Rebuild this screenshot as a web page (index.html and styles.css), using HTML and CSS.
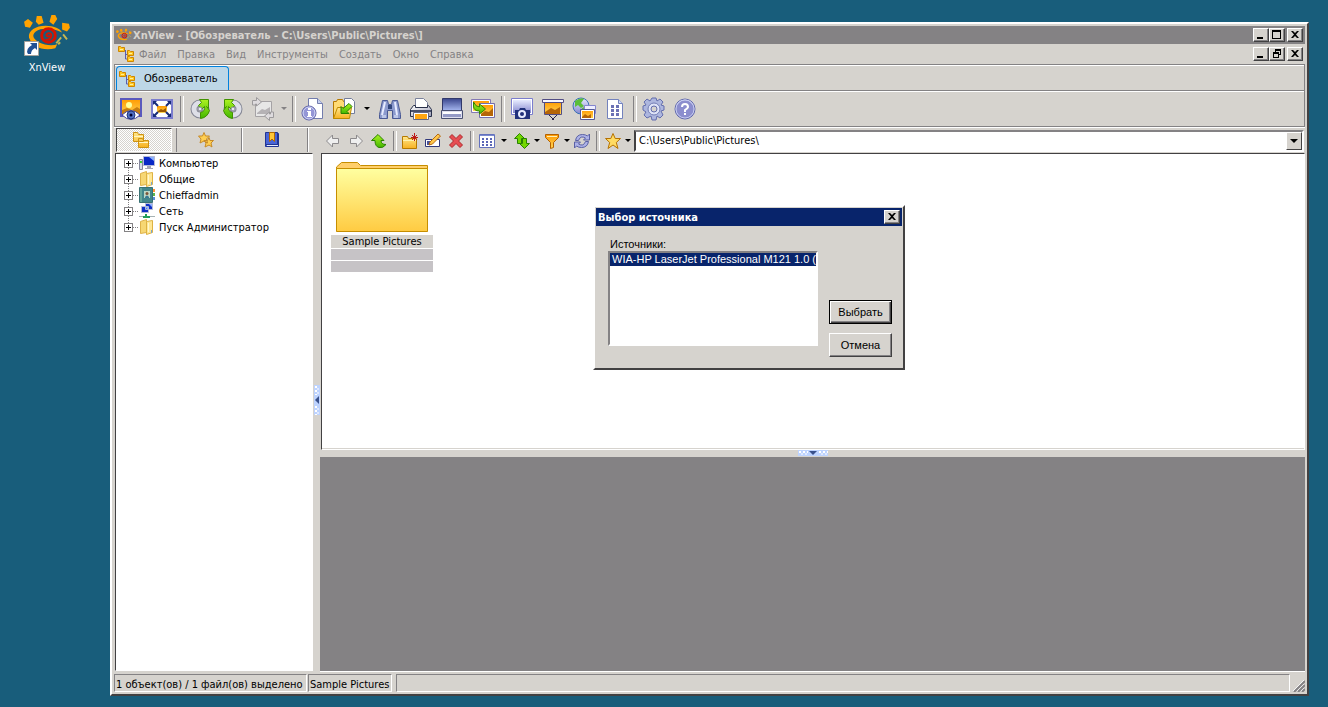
FILE: index.html
```
<!DOCTYPE html>
<html lang="ru">
<head>
    <meta charset="UTF-8">
    <meta name="viewport" content="width=device-width, initial-scale=1.0">
    <title>XnView - Обозреватель</title>
    <link rel="stylesheet" href="styles.css">
</head>
<body>
    <!-- Icon library -->
    <svg class="icon-library" aria-hidden="true">
        <defs>
            <linearGradient id="gOrange" x1="0" y1="0" x2="0" y2="1"><stop offset="0" stop-color="#ff9a00"/><stop offset="1" stop-color="#ffd75a"/></linearGradient>
            <linearGradient id="gFolder" x1="0" y1="0" x2="0" y2="1"><stop offset="0" stop-color="#ffffa0"/><stop offset="1" stop-color="#ffcb42"/></linearGradient>
            <linearGradient id="gGold" x1="0" y1="0" x2="0" y2="1"><stop offset="0" stop-color="#ffe78c"/><stop offset="1" stop-color="#f7b221"/></linearGradient>
            <linearGradient id="gBlue" x1="0" y1="0" x2="0" y2="1"><stop offset="0" stop-color="#e7ebff"/><stop offset="1" stop-color="#8486ce"/></linearGradient>
            <linearGradient id="gDeep" x1="0" y1="0" x2="0" y2="1"><stop offset="0" stop-color="#39458c"/><stop offset="1" stop-color="#a5b6ef"/></linearGradient>
            <linearGradient id="gGreen" x1="0" y1="0" x2="0" y2="1"><stop offset="0" stop-color="#adf321"/><stop offset="1" stop-color="#42b600"/></linearGradient>
            <linearGradient id="gGray" x1="0" y1="0" x2="1" y2="1"><stop offset="0" stop-color="#ffffff"/><stop offset="1" stop-color="#9c9eb5"/></linearGradient>
        </defs>
        <symbol id="logo" viewBox="0 0 48 40">
            <path fill="#ffa200" d="M0 8l4-3 5 4-3 5-5-1zM13 2h5l2 7-5 2-3-3zM28 1h4l2 4-4 6-4-3zM39 9l7 1 1 4-3 4-5-2z"/>
            <path fill="#ffa200" d="M5 24C4 17 12 12 22 12c9 0 15 3 17 7l-5-2c-6-2-17-3-22 1-5 4-2 8 3 11 6 3 14 4 19 2l-2 4c-7 2-15 1-20-2C8 30 6 27 5 24z"/>
            <path fill="none" stroke="#c6b652" stroke-width="2" d="M33 30l5-6M35 31l2-2M40 21l4 5"/>
            <circle cx="25" cy="22" r="7" fill="none" stroke="#d61400" stroke-width="3"/>
            <path fill="none" stroke="#d61400" stroke-width="2" d="M26 22c0 2-4 1-3-1s5-2 5 1-3 5-6 4"/>
        </symbol>
        <symbol id="tree" viewBox="0 0 16 16">
            <path fill="none" stroke="#5a5dad" d="M7.500 5v8h3M8 8.500h2M5 4.500h3"/>
            <path fill="#ffc721" stroke="#ce8600" d="M.5.5h2l1 1h3v4h-6zM9.500 4.500h2l1 1h3v4h-6zM9.500 10.500h2l1 1h3v4h-6z"/>
            <path fill="#ffef9c" d="M2 3h3v1H2zM11 7h3v1h-3zM11 13h3v1h-3z"/>
        </symbol>
        <symbol id="folder" viewBox="0 0 16 16"><path fill="#f7d773" stroke="#deb24a" d="M1.500 2.500l6-2v13l-6 1z"/><path fill="#ffe794" stroke="#deb242" d="M7.500 2.500l6-1v12l-6 2z"/><path fill="#fff7ce" d="M9 4h1v9H9z"/><path fill="#7ba6ce" d="M12 11h1v3h-1z"/></symbol>
        <symbol id="view" viewBox="0 0 24 24">
            <path fill="url(#gOrange)" stroke="#5a59bd" stroke-width="2" d="M2 2h20v17H2z"/><circle cx="10" cy="8" r="3" fill="#ffff9c"/>
            <path fill="#c67d10" d="M3 13l5-2 5 2 5-3 3 2v6H3z"/><path fill="#fff" stroke="#42419c" d="M3 18q9-9 18 0-9 9-18 0z"/><circle cx="12" cy="18" r="4" fill="#5271c6" stroke="#21347b"/><circle cx="12" cy="18" r="1.500" fill="#000031"/>
        </symbol>
        <symbol id="fullscreen" viewBox="0 0 24 24">
            <path fill="#fff" stroke="#7b7dce" stroke-width="2" d="M2 3h20v18H2z"/><path fill="url(#gOrange)" d="M7 9h10v7H7z"/><path fill="#9c5900" d="M8 14l3-2 2 1 3-2v4H8z"/>
            <path fill="#182c7b" d="M3 4h4L3 8zM21 4h-4l4 4zM3 20h4l-4-4zM21 20h-4l4-4z"/><path stroke="#182c7b" stroke-width="2" d="M4 5l4 4M20 5l-4 4M4 19l4-4M20 19l-4-4"/>
        </symbol>
        <symbol id="rotate" viewBox="0 0 24 24">
            <circle cx="11" cy="12" r="6" fill="none" stroke="#848694" stroke-width="7"/><circle cx="11" cy="12" r="6" fill="none" stroke="#dedfe7" stroke-width="5"/>
            <path fill="url(#gGreen)" stroke="#429200" d="M10.500 2.500h9v9l-2-2 3 4q-2 7-9 8v-6q5-1 4-6l-3 3-3-4 3-3z"/><circle cx="11" cy="12" r="2" fill="#e7e7ef" stroke="#848694"/>
        </symbol>
        <symbol id="convert" viewBox="0 0 24 24">
            <path fill="#e7e7e7" stroke="#a5a2a5" d="M4.500 4.500h16v15h-16z"/><path fill="#b5b2b5" d="M6 16l5-4 3 1 5-3v7H6z"/>
            <path fill="#dedbde" stroke="#9c9a9c" d="M1.500 8V3.500h4v-3l5 4.500-5 4V7h-1v1zM22.500 15v5.500h-4v3l-5-4.500 5-4V17h1v-2z"/>
        </symbol>
        <symbol id="info" viewBox="0 0 24 24">
            <path fill="#fff" stroke="#737dad" d="M7.500 1.500h9l5 5v15h-14z"/><path fill="#c6cfef" stroke="#737dad" d="M16.500 1.500v5h5"/>
            <circle cx="8" cy="16" r="7" fill="#9496d6" stroke="#5a5da5"/><circle cx="8" cy="16" r="6" fill="none" stroke="#d6dbf7"/><path fill="#fff" d="M7 11h3v2H7zM6 14h4v5h1v1H6v-1h1v-4H6z"/>
        </symbol>
        <symbol id="open" viewBox="0 0 24 24">
            <path fill="#ffdb73" stroke="#b57900" d="M1.500 4.500h3l1-2h5l1 2h3v17h-13z"/><path fill="#fff" stroke="#737d9c" d="M12.500 1.500h7l3 3v12h-10z"/>
            <path fill="url(#gGold)" stroke="#bd8a00" d="M1.500 21.500l4-11h14l-2 11z"/><path fill="url(#gGreen)" stroke="#298200" d="M17 6.500l3 3-5 5 2 2h-8v-7l2 2z"/>
        </symbol>
        <symbol id="find" viewBox="0 0 24 24">
            <path fill="#8c9ace" stroke="#4a5994" d="M4.500 3.500h5l1 4h3l1-4h5l3 14v4h-8v-8h-5v8h-8v-4z"/><path fill="none" stroke="#e7ebff" stroke-width="2" d="M7 5L4 18M17 5l2 13"/><path fill="#31457b" d="M10 8h4v4h-4z"/><path fill="#bdc7e7" d="M4 18h4v3H4zM16 18h4v3h-4z"/>
        </symbol>
        <symbol id="print" viewBox="0 0 24 24">
            <path fill="#fff" stroke="#7b829c" d="M6.500 1.500h8l4 4v7h-12z"/><path fill="url(#gGray)" stroke="#29304a" d="M1.500 12.500l3-4h2v2h12v-2h1l3 4v7h-21z"/><path fill="#4a516b" d="M2 13h20v2H2z"/><path fill="#fff" stroke="#636984" d="M4.500 15.500h15v7h-15z"/><path fill="#ffa610" d="M6 17h12v5H6z"/>
        </symbol>
        <symbol id="scan" viewBox="0 0 24 24">
            <path fill="url(#gDeep)" stroke="#31386b" d="M2.500 1.500h19v12h-19z"/><path fill="#dedfef" stroke="#4a5173" d="M1.500 13.500h21v8h-21z"/><path fill="#949ac6" d="M3 17h18v3H3z"/><path fill="#fff" d="M3 15h18v2H3z"/>
        </symbol>
        <symbol id="batch" viewBox="0 0 24 24">
            <path fill="url(#gOrange)" stroke="#fff" d="M1.500 3.500h17v11h-17z"/><path fill="none" stroke="#8479b5" d="M.5 2.500h19v13H.5z"/><path fill="url(#gOrange)" stroke="#fff" d="M9.500 7.500h13v12h-13z"/><path fill="none" stroke="#736dad" d="M8.500 6.500h15v14h-15z"/>
            <path fill="#b56508" d="M10 17l4-3 4 1 4-4v8H10z"/><path fill="url(#gGreen)" stroke="#318600" d="M2.500 5v4q0 5 6 5v3l6-5-6-5v3q-4 0-6-5z"/>
        </symbol>
        <symbol id="capture" viewBox="0 0 24 24">
            <path fill="#fff" stroke="#7b7dce" d="M1.500 1.500h21v16h-21z"/><path fill="url(#gBlue)" d="M3 3h18v13H3z"/><path fill="#21307b" d="M5 13h4l1-2h5l1 2h4v9H5z"/><circle cx="12" cy="17" r="4" fill="#e7ebff"/><circle cx="12" cy="17" r="2" fill="#21307b"/>
        </symbol>
        <symbol id="slides" viewBox="0 0 24 24">
            <path fill="url(#gOrange)" stroke="#524d84" d="M3.500 4.500h17v13h-17z"/><path fill="#b56508" d="M4 15l6-4 4 2 5-3v7H4z"/><path fill="#f7f7ff" stroke="#524d84" d="M1.500 2.500h21v3h-21z"/><path fill="none" stroke="#29244a" d="M8 18l4 4 4-4"/><path fill="#29244a" d="M11 21h2v2h-2z"/>
        </symbol>
        <symbol id="web" viewBox="0 0 24 24">
            <circle cx="9" cy="9" r="8" fill="url(#gBlue)" stroke="#3971b5"/><path fill="#5abe39" d="M3 4q6-4 9-2L9 6l3 3-3 2-3-3-3 2zM10 11l5-2-1 6-4 1z"/>
            <path fill="#efefff" stroke="#8486ce" d="M12.500 8.500h11v8h-11z"/><path fill="url(#gOrange)" stroke="#525a9c" stroke-width="1" d="M8.500 12.500h14v10h-14z"/><path fill="none" stroke="#fff" d="M9.500 13.500h12v8h-12z"/><path fill="#b56508" d="M10 20l3-3 3 2 3-2v4h-9z"/>
        </symbol>
        <symbol id="contact" viewBox="0 0 24 24">
            <path fill="#fff" stroke="#7382bd" d="M4.500 2.500h11l4 4v15h-15z"/><path fill="#ced7f7" stroke="#7382bd" d="M15.500 2.500v4h4"/><path fill="#6b71b5" d="M8 8h3v3H8zM13 8h3v3h-3zM8 12h3v3H8zM13 12h3v3h-3zM8 16h3v3H8zM13 16h3v3h-3z"/>
        </symbol>
        <symbol id="gear" viewBox="0 0 24 24">
            <path fill="#adb6de" stroke="#636dad" d="M10 1h4l1 3 3-2 3 3-2 3 3 1v4l-3 1 2 4-3 3-3-2-1 4h-4l-1-4-4 2-3-3 2-3-3-2V9l3-1-2-3 3-3 3 2z"/><circle cx="12" cy="12" r="6" fill="#dee3f7" stroke="#737db5"/><circle cx="12" cy="12" r="3" fill="#d6d3ce" stroke="#636dad"/>
        </symbol>
        <symbol id="help" viewBox="0 0 24 24">
            <circle cx="12" cy="12" r="10" fill="url(#gBlue)" stroke="#636aad"/><circle cx="12" cy="12" r="9" fill="#8c8ece" stroke="#c6cbef"/><path fill="none" stroke="#fff" stroke-width="2" d="M9 10q0-3 3-3t3 3q0 1-3 3v2"/><path fill="#fff" d="M11 16h2v2h-2z"/>
        </symbol>
        <symbol id="folders" viewBox="0 0 16 16"><path fill="url(#gGold)" stroke="#ce9210" d="M.5.5h4l1 2h5v7H.5zM5.500 6.500h4l1 2h5v7h-10z"/><path fill="#fff7c6" d="M1 4h9v1H1zM6 10h9v1H6z"/></symbol>
        <symbol id="stars" viewBox="0 0 16 16"><path fill="#ffcf52" stroke="#c68a29" d="M6 .5l1.500 3.500h4L8.500 7l1 4L6 9l-4 2 1-4L.5 4h4zM11 5.500l1 3h3.500L13 11l1 4-3-2-4 2 1-4-2-2.500h3.500z"/></symbol>
        <symbol id="book" viewBox="0 0 16 16"><path fill="#4a65d6" stroke="#213494" d="M1.500.5h12v12h-12zM1.500 12.500v2h13v-13h-1v11z"/><path fill="#e7ebff" d="M3 13h11v1H3z"/><path fill="#ffc739" stroke="#b56900" d="M5.500.5h5v9L8 7l-2.500 2.500z"/></symbol>
        <symbol id="back" viewBox="0 0 16 16"><path fill="#efefef" stroke="#8c8a8c" d="M1.500 8l6-6v3.500h6v5h-6V14z"/></symbol>
        <symbol id="up" viewBox="0 0 16 16"><path fill="url(#gGreen)" stroke="#298200" d="M.5 7.500L7 1.500l6 6h-3q0 4 5 4-3 4-7 3-4-1-4-7z"/></symbol>
        <symbol id="newfolder" viewBox="0 0 16 16"><path fill="url(#gGold)" stroke="#b57900" d="M.5 3.500h5l1 2h8v10H.5z"/><path fill="#fff3ad" d="M1 7h13v1H1z"/><path stroke="#bd1818" stroke-width="1" d="M12.500 0v8M9 4.500h7M10 2l5 5M15 2l-5 5"/></symbol>
        <symbol id="rename" viewBox="0 0 16 16"><path fill="#fff" stroke="#31387b" d="M.5 6.500h14v7H.5z"/><path fill="#4a5194" d="M2 8h3v4H2z"/><path fill="#ffc74a" stroke="#b56910" d="M4 12l1-3 8-8 2.500 2-8 8z"/></symbol>
        <symbol id="delete" viewBox="0 0 16 16"><path fill="#e74d52" stroke="#ad2829" d="M1.500 4L4 1.500l4 4 4-4L14.500 4l-4 4 4 4-2.500 2.500-4-4-4 4L1.500 12l4-4z"/></symbol>
        <symbol id="grid" viewBox="0 0 16 16"><path fill="#fff" stroke="#6371bd" d="M.5 1.500h15v13H.5z"/><path fill="#7b8ace" d="M1 2h14v1H1z"/><path stroke="#5a65b5" stroke-width="2" stroke-dasharray="2 2" d="M3 6h11M3 9h11M3 12h11"/></symbol>
        <symbol id="sort" viewBox="0 0 16 16"><path fill="#73d700" stroke="#298200" d="M.5 5.500l5-5 5 5h-3v5h-4v-5zM5.500 10.500h3v-5h4v5h3l-5 5z"/></symbol>
        <symbol id="filter" viewBox="0 0 16 16"><path fill="url(#gOrange)" stroke="#b56100" d="M1.500 1.500h13v3l-5 5v5l-3 1v-6l-5-5z"/><path stroke="#ffefb5" d="M3 3.500h10"/></symbol>
        <symbol id="refresh" viewBox="0 0 16 16"><path fill="#adb2e7" stroke="#5a61a5" d="M1.500 7.500q1-6 7-6 3 0 5 1.500L15.500 1v6h-6l2-2q-5-3-7 2.500zM14.500 8.500q-1 6-7 6-3 0-5-1.500L.5 15V9h6l-2 2q5 3 7-2.500z"/></symbol>
        <symbol id="star" viewBox="0 0 16 16"><path fill="#ffdb63" stroke="#b57100" d="M8 .5l2.200 5h5.300l-4.200 4 1.700 6-5-3.500-5 3.500 1.700-6-4.200-4h5.300z"/></symbol>
        <symbol id="computer" viewBox="0 0 16 16"><path fill="#d6dbe7" stroke="#84869c" d="M.5 4.500h3v10h-3z"/><path fill="#39cf39" d="M1 6h2v2H1z"/><path fill="#0828c6" stroke="#b5bad6" d="M4.500 1.500h11v9h-11z"/><path fill="#8cb2ff" d="M10 2h5v4z"/><path fill="#a5a6b5" d="M8 11h4v2h2v1H6v-1h2z"/></symbol>
        <symbol id="user" viewBox="0 0 16 16"><path fill="#42868c" stroke="#397173" d="M.5.5h13v15H.5z"/><path fill="#63a69c" d="M1 1h2v14H1z"/><path fill="#bdd7c6" d="M5 4h6v7H5z"/><circle cx="8" cy="6.500" r="1.500" fill="#7b5539"/><path fill="#397994" d="M6 10q2-3 4 0v1H6z"/><path fill="#ff9239" d="M14 2h2v3h-2z"/><path fill="#5ab64a" d="M14 6h2v3h-2z"/><path fill="#5a8ed6" d="M14 10h2v3h-2z"/></symbol>
        <symbol id="network" viewBox="0 0 16 16"><path fill="#1030c6" stroke="#b5bad6" d="M6.500.5h7v6h-7zM2.500 3.500h7v6h-7z"/><path fill="#8cb2ff" d="M10 1h3v3zM6 4h3v3z"/><path fill="#219e5a" d="M6 11h2v2h3v2H4v-2h2z"/><path fill="#a5b2b5" d="M0 13h4v1H0zM11 13h5v1h-5z"/></symbol>
    </svg>

    <main class="desktop">
        <a class="shortcut" href="#">
            <span class="shortcut-picture">
                <svg class="shortcut-logo"><use href="#logo"/></svg>
                <svg class="shortcut-badge" viewBox="0 0 15 15"><path fill="#fff" stroke="#a5a29c" d="M.5.5h14v14H.5z"/><path fill="#215194" d="M6 2h7v7l-2-2q-4 2-4 6H4Q1 8 8 4z"/></svg>
            </span>
            <span>XnView</span>
        </a>

        <section class="window">
            <header class="titlebar">
                <svg class="icon16"><use href="#logo"/></svg>
                <h1>XnView - [Обозреватель - C:\Users\Public\Pictures\]</h1>
                <div class="window-buttons">
                    <button aria-label="Свернуть"><svg viewBox="0 0 12 10"><path d="M2 7h6v2H2z"/></svg></button>
                    <button aria-label="Развернуть"><svg viewBox="0 0 12 10"><path fill-rule="evenodd" d="M1 0h9v9H1zM2 2v6h7V2z"/></svg></button>
                    <button class="close" aria-label="Закрыть"><svg viewBox="0 0 12 10"><path d="M2 1h2l2 2 2-2h2L7 4.500 10 8H8L6 6 4 8H2l3-3.500z"/></svg></button>
                </div>
            </header>
            <nav class="menubar">
                <svg class="icon16"><use href="#tree"/></svg>
                <button>Файл</button>
                <button>Правка</button>
                <button>Вид</button>
                <button>Инструменты</button>
                <button>Создать</button>
                <button>Окно</button>
                <button>Справка</button>
                <div class="window-buttons">
                    <button aria-label="Свернуть документ"><svg viewBox="0 0 12 10"><path d="M2 7h6v2H2z"/></svg></button>
                    <button aria-label="Восстановить документ"><svg viewBox="0 0 12 10"><path fill-rule="evenodd" d="M4 0h6v6H8V5h1V2H5v1H4zM2 3h6v6H2zM3 5v3h4V5z"/></svg></button>
                    <button class="close" aria-label="Закрыть документ"><svg viewBox="0 0 12 10"><path d="M2 1h2l2 2 2-2h2L7 4.500 10 8H8L6 6 4 8H2l3-3.500z"/></svg></button>
                </div>
            </nav>
            <div class="tabstrip">
                <button class="tab"><svg class="icon16"><use href="#tree"/></svg>Обозреватель</button>
            </div>
            <div class="toolbar">
                <button aria-label="Просмотр"><svg><use href="#view"/></svg></button>
                <button aria-label="Полный экран"><svg><use href="#fullscreen"/></svg></button>
                <span class="separator"></span>
                <button aria-label="Повернуть влево"><svg><use href="#rotate"/></svg></button>
                <button class="mirrored" aria-label="Повернуть вправо"><svg><use href="#rotate"/></svg></button>
                <button aria-label="Преобразовать" disabled><svg><use href="#convert"/></svg></button>
                <button class="arrow" aria-label="Варианты преобразования" disabled></button>
                <span class="separator"></span>
                <button aria-label="Свойства"><svg><use href="#info"/></svg></button>
                <button aria-label="Открыть"><svg><use href="#open"/></svg></button>
                <button class="arrow wide" aria-label="Недавние файлы"></button>
                <button aria-label="Найти"><svg><use href="#find"/></svg></button>
                <button aria-label="Печать"><svg><use href="#print"/></svg></button>
                <button aria-label="Сканировать"><svg><use href="#scan"/></svg></button>
                <button aria-label="Пакетная обработка"><svg><use href="#batch"/></svg></button>
                <span class="separator"></span>
                <button aria-label="Снимок экрана"><svg><use href="#capture"/></svg></button>
                <button aria-label="Слайд-шоу"><svg><use href="#slides"/></svg></button>
                <button aria-label="Веб-страница"><svg><use href="#web"/></svg></button>
                <button aria-label="Контактный лист"><svg><use href="#contact"/></svg></button>
                <span class="separator"></span>
                <button aria-label="Настройки"><svg><use href="#gear"/></svg></button>
                <button aria-label="Справка XnView"><svg><use href="#help"/></svg></button>
            </div>

            <div class="browser">
                <aside class="sidebar">
                    <div class="side-tabs">
                        <button class="active" aria-label="Папки"><svg class="icon16"><use href="#folders"/></svg></button>
                        <button aria-label="Избранное"><svg class="icon16"><use href="#stars"/></svg></button>
                        <button aria-label="Категории"><svg class="icon16"><use href="#book"/></svg></button>
                    </div>
                    <ul class="tree">
                        <li><button aria-label="Раскрыть Компьютер"></button><svg class="icon16"><use href="#computer"/></svg><span>Компьютер</span></li>
                        <li><button aria-label="Раскрыть Общие"></button><svg class="icon16"><use href="#folder"/></svg><span>Общие</span></li>
                        <li><button aria-label="Раскрыть Chieffadmin"></button><svg class="icon16"><use href="#user"/></svg><span>Chieffadmin</span></li>
                        <li><button aria-label="Раскрыть Сеть"></button><svg class="icon16"><use href="#network"/></svg><span>Сеть</span></li>
                        <li><button aria-label="Раскрыть Пуск Администратор"></button><svg class="icon16"><use href="#folder"/></svg><span>Пуск Администратор</span></li>
                    </ul>
                </aside>
                <div class="splitter vertical">
                    <svg viewBox="0 0 6 30"><path fill="#bdd3ff" d="M0 0h6v30H0z"/><path stroke="#fff" stroke-width="2" stroke-dasharray="2 2" d="M2 1v9M2 21v9"/><path stroke="#fff" stroke-width="1" stroke-dasharray="2 2" d="M4 3v7M4 23v7"/><path fill="#39518c" d="M5 11v8l-4-4z"/></svg>
                </div>
                <div class="content">
                    <div class="pathbar">
                        <button aria-label="Назад" disabled><svg><use href="#back"/></svg></button>
                        <button class="mirrored" aria-label="Вперёд" disabled><svg><use href="#back"/></svg></button>
                        <button aria-label="Вверх"><svg><use href="#up"/></svg></button>
                        <span class="separator"></span>
                        <button aria-label="Новая папка"><svg><use href="#newfolder"/></svg></button>
                        <button aria-label="Переименовать"><svg><use href="#rename"/></svg></button>
                        <button aria-label="Удалить"><svg><use href="#delete"/></svg></button>
                        <span class="separator"></span>
                        <button aria-label="Вид"><svg><use href="#grid"/></svg></button>
                        <button class="arrow wide" aria-label="Варианты вида"></button>
                        <button aria-label="Сортировка"><svg><use href="#sort"/></svg></button>
                        <button class="arrow" aria-label="Варианты сортировки"></button>
                        <button aria-label="Фильтр"><svg><use href="#filter"/></svg></button>
                        <button class="arrow" aria-label="Варианты фильтра"></button>
                        <button aria-label="Обновить"><svg><use href="#refresh"/></svg></button>
                        <span class="separator"></span>
                        <button aria-label="В избранное"><svg><use href="#star"/></svg></button>
                        <button class="arrow" aria-label="Список избранного"></button>
                        <div class="address">
                            <input type="text" aria-label="Путь" value="C:\Users\Public\Pictures\">
                            <button class="arrow" aria-label="История путей"></button>
                        </div>
                    </div>
                    <div class="files">
                        <figure class="thumb">
                            <svg viewBox="0 0 92 70"><path fill="#ffcf6b" stroke="#c68e00" d="M.5 69V5l5-4.500h16l3 3h67V69z"/><path fill="url(#gFolder)" stroke="#c68e00" d="M.5 6.500h91v63H.5z"/></svg>
                            <figcaption>Sample Pictures</figcaption>
                            <span class="thumb-line"></span>
                            <span class="thumb-line"></span>
                        </figure>
                    </div>
                    <div class="splitter horizontal">
                        <svg viewBox="0 0 30 6"><path fill="#bdd3ff" d="M0 0h30v6H0z"/><path stroke="#fff" stroke-width="2" stroke-dasharray="2 2" d="M1 2h9M21 2h9"/><path stroke="#fff" stroke-dasharray="2 2" d="M3 4h7M23 4h7"/><path fill="#39518c" d="M11 1h8l-4 4z"/></svg>
                    </div>
                    <div class="preview"></div>
                </div>
            </div>

            <footer class="statusbar">
                <span class="status-count">1 объект(ов) / 1 файл(ов) выделено</span>
                <span class="status-name">Sample Pictures</span>
                <span class="status-rest"></span>
                <svg class="grip" viewBox="0 0 12 12"><path stroke="#fff" d="M0 11L11 0M4 11l7-7M8 11l3-3"/><path stroke="#848284" stroke-width="2" d="M1 12L12 1M5 12l7-7M9 12l3-3"/></svg>
            </footer>
        </section>

        <section class="dialog" role="dialog" aria-labelledby="dialogTitle">
            <header class="titlebar">
                <h2 id="dialogTitle">Выбор источника</h2>
                <div class="window-buttons">
                    <button class="close" aria-label="Закрыть окно"><svg viewBox="0 0 12 10"><path d="M2 1h2l2 2 2-2h2L7 4.500 10 8H8L6 6 4 8H2l3-3.500z"/></svg></button>
                </div>
            </header>
            <form class="dialog-body">
                <div class="sources">
                    <label for="sourceList">Источники:</label>
                    <select id="sourceList" size="6">
                        <option selected>WIA-HP LaserJet Professional M121 1.0 (32-32)</option>
                    </select>
                </div>
                <div class="dialog-actions">
                    <button type="button" class="default">Выбрать</button>
                    <button type="button">Отмена</button>
                </div>
            </form>
        </section>
    </main>
</body>
</html>
```
FILE: styles.css
```
* { box-sizing: border-box; }
body { margin: 0; background-color: #185d7b; color: #000; font: 11px/13px "DejaVu Sans Condensed", "DejaVu Sans", sans-serif; }
button, input, select { font: inherit; color: inherit; margin: 0; padding: 0; border: none; border-radius: 0; }
button { background: none; }
svg { display: block; flex: none; }
.icon-library { position: absolute; width: 0; height: 0; }
.icon16 { width: 16px; height: 16px; }

.desktop { display: flex; height: 100vh; padding: 22px 19px 11px 0; position: relative; }
.shortcut { width: 110px; flex: none; margin-top: -8px; padding-right: 16px; text-align: center; color: #fff; text-decoration: none; }
.shortcut-picture { display: block; position: relative; width: 47px; height: 47px; margin: 0 auto; }
.shortcut-logo { width: 47px; height: 39px; }
.shortcut-badge { position: absolute; left: 0; bottom: 5px; width: 15px; height: 15px; }

/* Window frame */
.window { flex: 1; min-width: 0; display: flex; flex-direction: column; padding: 2px; background-color: #d6d3ce; border: 2px solid; border-color: #fff #424142 #424142 #fff; }
.titlebar { display: flex; align-items: center; height: 18px; flex: none; padding: 0 2px; background-color: #848284; color: #d6d3ce; }
.titlebar .icon16 { margin-right: 1px; }
.titlebar h1, .titlebar h2 { flex: 1; margin: 0; font-size: 11px; line-height: 13px; font-weight: bold; white-space: nowrap; overflow: hidden; }
.window-buttons { display: flex; margin-left: auto; }
.window-buttons button { width: 16px; height: 14px; padding: 1px; background-color: #d6d3ce; border: 1px solid; border-color: #fff #424142 #424142 #fff; box-shadow: inset -1px -1px #848284; }
.window-buttons .close { margin-left: 2px; }
.window-buttons svg { width: 12px; height: 10px; }

.menubar { display: flex; align-items: center; gap: 11px; height: 20px; flex: none; padding: 0 2px 0 4px; color: #848284; }
.menubar > .icon16 { margin-right: -6px; }

.tabstrip { display: flex; align-items: flex-end; height: 26px; flex: none; border: 1px solid #848284; border-bottom: none; box-shadow: inset 0 1px #fff; padding-left: 1px; }
.tab { display: flex; align-items: center; gap: 9px; height: 24px; padding: 0 10px 0 2px; background-color: #bdd7e7; border: 1px solid #0082de; border-bottom: none; border-radius: 4px 4px 0 0; }

.toolbar { display: flex; align-items: center; height: 37px; flex: none; border: 1px solid #848284; box-shadow: inset 0 1px #fff, 0 1px #fff; }
.toolbar button { display: flex; justify-content: center; width: 31px; flex: none; }
.toolbar svg { width: 24px; height: 24px; }
.mirrored svg { transform: scaleX(-1); }
.separator { width: 8px; height: 26px; flex: none; }
.separator::before { content: ""; display: block; width: 2px; height: 100%; margin-left: 3px; border-left: 1px solid #848284; border-right: 1px solid #fff; }
.arrow::before { content: ""; border: 3px solid transparent; border-top-color: #000; border-bottom: none; }
.arrow:disabled::before { border-top-color: #848284; }
.toolbar .arrow { width: 11px; }
.toolbar .arrow.wide { width: 15px; }

/* Browser panes */
.browser { flex: 1; min-height: 0; display: flex; padding-top: 1px; }
.sidebar { display: flex; flex-direction: column; width: 199px; flex: none; padding-left: 1px; }
.side-tabs { display: flex; height: 25px; flex: none; }
.side-tabs button { display: flex; align-items: center; justify-content: center; width: 66px; height: 24px; padding-right: 6px; border-right: 1px solid #848284; box-shadow: 1px 0 #fff; }
.side-tabs .active { width: 56px; margin: 0 4px 0 1px; border: 1px solid; border-color: #424142 #fff #fff #424142; box-shadow: 4px 0 #d6d3ce, 5px 0 #848284; background: repeating-conic-gradient(#fff 0 25%, #d6d3ce 0 50%) 0 0 / 2px 2px; }
.tree { flex: 1; margin: 0; padding: 1px 8px; list-style: none; background-color: #fff; border: 1px solid; border-color: #424142 #fff #fff #424142; overflow: hidden; }
.tree li { display: flex; align-items: center; height: 16px; white-space: nowrap; }
.tree button { position: relative; width: 9px; height: 9px; background: linear-gradient(#000, #000) center / 5px 1px no-repeat, linear-gradient(#000, #000) center / 1px 5px no-repeat, #fff; border: 1px solid #848284; }
.tree button::before { content: ""; position: absolute; left: 8px; top: 3px; width: 5px; border-top: 1px dotted #848284; }
.tree li + li button::after { content: ""; position: absolute; left: 3px; top: -8px; height: 7px; border-left: 1px dotted #848284; }
.tree .icon16 { margin: 0 4px 0 6px; }

.splitter { display: flex; align-items: center; justify-content: center; flex: none; }
.splitter.vertical { width: 7px; }
.splitter.vertical svg { width: 6px; height: 30px; }
.splitter.horizontal { height: 7px; }
.splitter.horizontal svg { width: 30px; height: 6px; }

.content { flex: 1; min-width: 0; display: flex; flex-direction: column; }
.pathbar { display: flex; align-items: center; height: 25px; flex: none; padding: 0 1px; }
.pathbar button { display: flex; align-items: center; justify-content: center; width: 23px; height: 22px; flex: none; }
.pathbar svg { width: 16px; height: 16px; }
.pathbar .separator { height: 20px; }
.pathbar .arrow { width: 7px; }
.pathbar .arrow.wide { width: 12px; }
.address { display: flex; flex: 1; min-width: 0; height: 22px; margin-left: 3px; background-color: #fff; border: 2px solid; border-color: #848284 #fff #fff #424142; }
.address input { flex: 1; min-width: 0; padding: 0 3px; background: none; }
.address .arrow { width: 16px; height: 18px; background-color: #d6d3ce; border: 1px solid; border-color: #fff #424142 #424142 #fff; }
.address .arrow::before { border-width: 4px 4px 0; }

.files { flex: 278 1 0; min-height: 0; padding: 8px 9px; background-color: #fff; border: 1px solid; border-color: #424142 #fff #fff #424142; box-shadow: inset 0 -1px #d6d3ce; margin-left: 1px; overflow: hidden; }
.thumb { display: flex; flex-direction: column; gap: 1px; width: 102px; margin: 0; text-align: center; }
.thumb svg { width: 92px; height: 70px; margin: 0 auto 2px; }
.thumb figcaption { background-color: #d6d3ce; }
.thumb-line { height: 11px; background-color: #c6c3c6; }
.preview { flex: 214 1 0; background-color: #848284; box-shadow: 0 1px #fff; }

.statusbar { display: flex; height: 21px; flex: none; padding-top: 3px; white-space: nowrap; }
.statusbar span { padding: 3px 1px 0; border: 1px solid; border-color: #848284 #fff #fff #848284; }
.status-count { width: 193px; margin-right: 1px; }
.status-name { width: 84px; margin-right: 4px; }
.statusbar .status-rest { flex: 1; margin-right: 3px; }
.grip { width: 12px; height: 12px; align-self: flex-end; }

/* Source dialog */
.dialog { position: absolute; left: 593px; top: 205px; width: 312px; padding: 1px; background-color: #d6d3ce; border: 2px solid; border-color: #fff #424142 #424142 #fff; }
.dialog .titlebar { background-color: #08246b; color: #fff; }
.dialog .titlebar h2 { padding-left: 0; }
.dialog-body { display: flex; gap: 11px; padding: 12px 10px 10px 12px; font-family: "Liberation Sans", Arial, sans-serif; }
.sources { flex: 1; min-width: 0; }
.sources label { display: block; padding-left: 2px; }
.sources select { display: block; width: 100%; height: 95px; background-color: #fff; border: 2px solid; border-color: #848284 #fff #fff #848284; outline: none; overflow: hidden; }
.sources option { min-height: 13px; padding: 0 2px; }
.sources option:checked { background: #08246b linear-gradient(#08246b, #08246b); color: #fff; }
.dialog-actions { display: flex; flex-direction: column; gap: 9px; width: 63px; padding-top: 62px; }
.dialog-actions button { height: 24px; border: 1px solid; border-color: #fff #424142 #424142 #fff; box-shadow: inset -1px -1px #848284; }
.dialog-actions .default { border-color: #000; box-shadow: inset 1px 1px #fff, inset -1px -1px #424142, inset -2px -2px #848284; }
```
